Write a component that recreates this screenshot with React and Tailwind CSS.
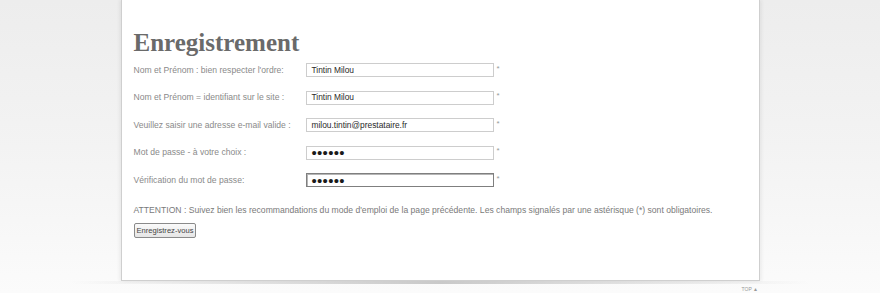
const fields = [
  { label: "Nom et Prénom : bien respecter l'ordre:", value: "Tintin Milou" },
  { label: "Nom et Prénom = identifiant sur le site :", value: "Tintin Milou" },
  { label: "Veuillez saisir une adresse e-mail valide :", value: "milou.tintin@prestataire.fr" },
  { label: "Mot de passe - à votre choix :", value: "tintin", password: true },
  { label: "Vérification du mot de passe:", value: "tintin", password: true, focused: true },
];

function Field({ label, value, password, focused }) {
  return (
    <div className="flex items-center h-[14px]">
      <label className="w-[172px] shrink-0 text-[8.6px] text-[#8a8a8a] leading-none">{label}</label>
      <div
        className={
          focused
            ? "w-[188px] h-[14px] bg-white border border-[#7f7f7f] shadow-[inset_1px_1px_0_#b5b5b5] flex items-center pl-[5px] overflow-hidden"
            : "w-[188px] h-[14px] bg-white border border-[#cdcdcd] flex items-center pl-[5px] overflow-hidden"
        }
      >
        {password ? (
          <span className="text-[15px] leading-none text-[#1a1a1a] tracking-[0.3px]">••••••</span>
        ) : (
          <span className="text-[8.4px] leading-none text-[#2a2a2a]">{value}</span>
        )}
      </div>
      <span className="ml-[3px] -mt-[3px] text-[8px] text-[#999] leading-none">*</span>
    </div>
  );
}

export default function App() {
  return (
    <div
      className="w-[880px] h-[293px] overflow-hidden bg-gradient-to-b from-[#ededed] via-[#f3f3f3] to-[#fbfbfb] flex flex-col items-center"
      style={{ fontFamily: '"Liberation Sans", Arial, sans-serif' }}
    >
      <div className="w-[639px] h-[281px] shrink-0 bg-white border-x border-b border-[#cfcfcf] shadow-[-2px_0_3px_rgba(0,0,0,0.05),2px_0_3px_rgba(0,0,0,0.05)] pl-[12px] pt-[29px]">
        <h1
          className="text-[25px] leading-[28px] font-bold text-[#6a6a6a]"
          style={{ fontFamily: '"Liberation Serif", Georgia, serif' }}
        >
          Enregistrement
        </h1>
        <form className="mt-[6px] flex flex-col gap-[13.5px]">
          {fields.map((f, i) => (
            <Field key={i} {...f} />
          ))}
        </form>
        <p className="mt-[17px] text-[8.6px] leading-[12px] text-[#7a7a7a]">
          ATTENTION : Suivez bien les recommandations du mode d'emploi de la page précédente. Les champs signalés par une astérisque (*) sont obligatoires.
        </p>
        <button className="mt-[6px] h-[15px] px-[2px] border border-[#8a8a8a] rounded-[2px] bg-gradient-to-b from-[#fafafa] to-[#e6e6e6] text-[7.6px] font-normal leading-none text-[#444]">
          Enregistrez-vous
        </button>
      </div>
      <div className="w-[740px] h-[3px] shrink-0 bg-gradient-to-r from-transparent via-[#c9c9c9] to-transparent" />
      <div className="w-[640px] flex justify-end pr-[2px] pt-[3px]">
        <span className="text-[5px] leading-none text-[#999]">TOP ▲</span>
      </div>
    </div>
  );
}
